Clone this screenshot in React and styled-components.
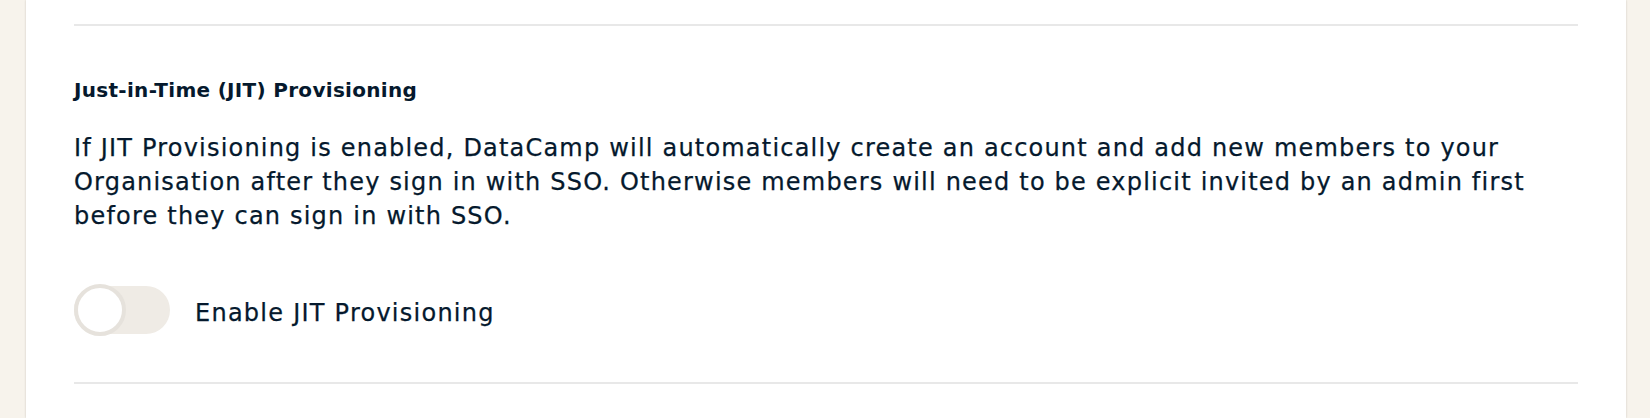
import React, {useState} from 'react'
import styled, {createGlobalStyle} from 'styled-components'

const Global = createGlobalStyle`
    body {
        margin: 0;
        background: #f7f3ec;
        font-family: "DejaVu Sans", "Noto Sans", sans-serif;
        color: #05192d;
    }
`

const Page = styled.div`
    display: flex;
    padding: 0 24px 0 26px;
    height: 418px;
    overflow: hidden;
`

const Card = styled.div`
    flex: 1;
    background: #ffffff;
    padding: 24px 48px 0 48px;
    box-shadow: 0 0 2px rgba(60, 50, 30, 0.22);
`

const Divider = styled.hr`
    margin: 0;
    border: none;
    height: 2px;
    background: #e8e8e8;
`

const Section = styled.section`
    display: flex;
    flex-direction: column;
    padding: 52px 0 46px 0;
`

const Title = styled.h3`
    margin: 0 0 29px 0;
    font-size: 20px;
    line-height: 24px;
    font-weight: 700;
    letter-spacing: 0.3px;
`

const Description = styled.p`
    margin: 0 0 51px 0;
    font-size: 24px;
    line-height: 34px;
    letter-spacing: 1.2px;
    -webkit-text-stroke: 0.25px #05192d;
`

const ToggleRow = styled.label`
    display: flex;
    align-items: center;
    gap: 25px;
    cursor: pointer;
`

const Track = styled.span`
    position: relative;
    display: block;
    width: 96px;
    height: 48px;
    border-radius: 24px;
    background: ${props => props.on ? '#03ef62' : '#efebe5'};
    margin: 2px 0;
`

const Knob = styled.span`
    position: absolute;
    top: -2px;
    left: ${props => props.on ? '44px' : '0'};
    width: 52px;
    height: 52px;
    box-sizing: border-box;
    border-radius: 50%;
    background: #ffffff;
    border: 4px solid #e6e2dc;
`

const ToggleLabel = styled.span`
    margin-top: 5px;
    font-size: 24px;
    line-height: 34px;
    letter-spacing: 1.25px;
    -webkit-text-stroke: 0.25px #05192d;
`

const App = () => {
    const [on, setOn] = useState(false)
    return(
        <>
            <Global />
            <Page>
                <Card>
                    <Divider />
                    <Section>
                        <Title>Just-in-Time (JIT) Provisioning</Title>
                        <Description>
                            If JIT Provisioning is enabled, DataCamp will automatically create an account and add new members to your Organisation after they sign in with SSO. Otherwise members will need to be explicit invited by an admin first before they can sign in with SSO.
                        </Description>
                        <ToggleRow onClick={() => setOn(!on)}>
                            <Track on={on ? 1 : 0}>
                                <Knob on={on ? 1 : 0} />
                            </Track>
                            <ToggleLabel>Enable JIT Provisioning</ToggleLabel>
                        </ToggleRow>
                    </Section>
                    <Divider />
                </Card>
            </Page>
        </>
    )
}

export default App
